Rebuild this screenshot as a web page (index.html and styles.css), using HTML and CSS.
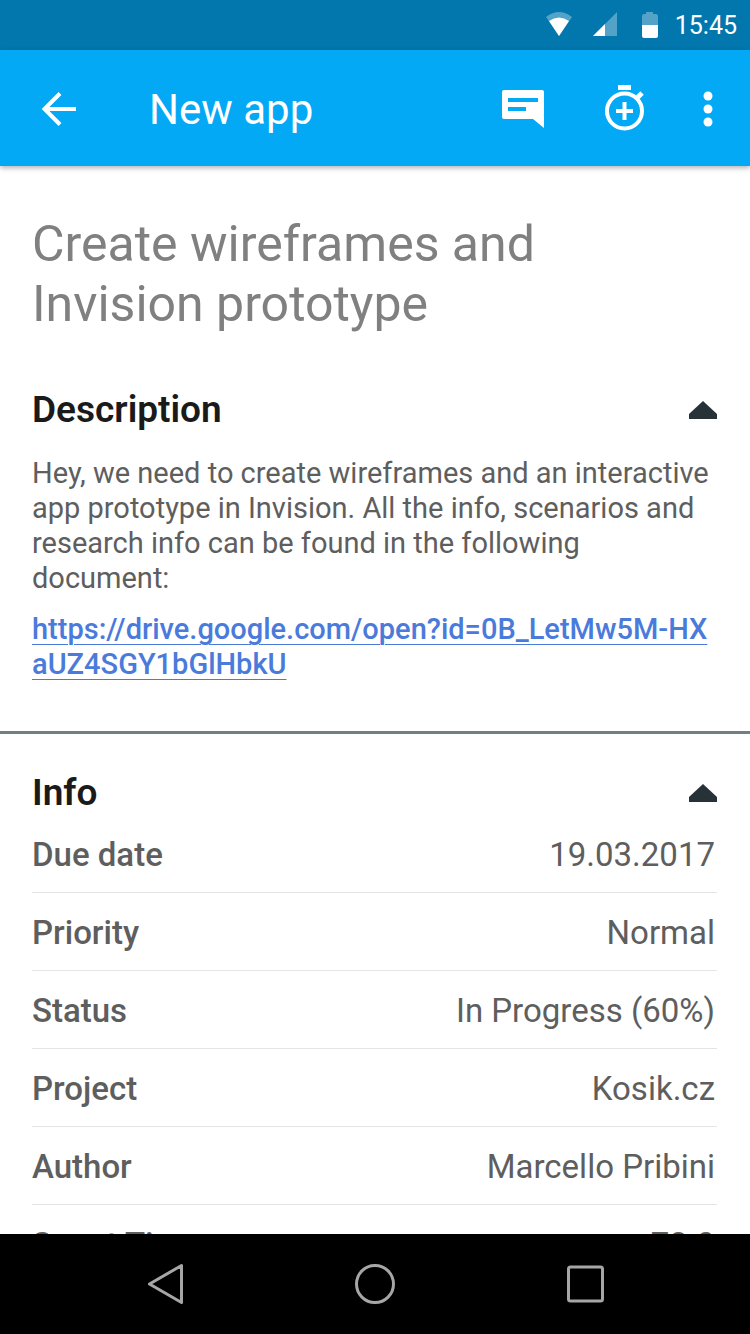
FILE: index.html
```html
<!DOCTYPE html>
<html lang="en">
<head>
  <meta charset="UTF-8">
  <title>New app</title>
  <meta name="viewport" content="width=device-width, initial-scale=1.0">
  <link rel="stylesheet" href="styles.css">
</head>
<body>
  <div class="status-bar">
    <svg class="status-icon" width="28" height="26" viewBox="0 0 28 26" aria-hidden="true">
      <path d="M1 5Q14-5 27 5L14 24Z" fill="#fff" opacity=".32"/>
      <path d="M4 9Q14 2 24 9L14 24Z" fill="#fff"/>
    </svg>
    <svg class="status-icon" width="24" height="26" viewBox="0 0 24 26" aria-hidden="true">
      <path d="M24 0V24H0Z" fill="#fff" opacity=".32"/>
      <path d="M12 12V24H0Z" fill="#fff"/>
    </svg>
    <svg class="status-icon battery" width="18" height="26" viewBox="0 0 18 26" aria-hidden="true">
      <path d="M5 0H12V2H15Q17 2 17 4V13H1V4Q1 2 3 2H5Z" fill="#fff" opacity=".32"/>
      <path d="M1 13H17V24Q17 26 15 26H3Q1 26 1 24Z" fill="#fff"/>
    </svg>
    <span class="clock">15:45</span>
  </div>

  <header class="app-bar">
    <button class="icon-btn" aria-label="Back">
      <svg width="36" height="36" viewBox="0 0 36 36" fill="none" stroke="#fff" stroke-width="4">
        <path d="M35 18H4M19 2.500L3.500 18L19 33.500"/>
      </svg>
    </button>
    <h1>New app</h1>
    <button class="icon-btn comment" aria-label="Comments">
      <svg width="42" height="38" viewBox="0 0 42 38">
        <path fill="#fff" fill-rule="evenodd" d="M2 0H40Q42 0 42 2V38L31 29H2Q0 29 0 27V2Q0 0 2 0ZM6 8V12H36V8ZM6 17V21H24V17Z"/>
      </svg>
    </button>
    <button class="icon-btn timer" aria-label="Add time">
      <svg width="40" height="48" viewBox="0 0 40 48" fill="none" stroke="#fff">
        <circle cx="19.500" cy="26" r="17.500" stroke-width="4"/>
        <path d="M13 2.500H26" stroke-width="5"/>
        <path d="M32 13L37 8" stroke-width="5"/>
        <path d="M11 26H28M19.500 17V35" stroke-width="4"/>
      </svg>
    </button>
    <button class="icon-btn" aria-label="More options">
      <svg width="10" height="36" viewBox="0 0 10 36" fill="#fff">
        <circle cx="5" cy="5" r="4.500"/>
        <circle cx="5" cy="18" r="4.500"/>
        <circle cx="5" cy="31" r="4.500"/>
      </svg>
    </button>
  </header>

  <main class="content">
    <h2 class="task-title">Create wireframes and Invision prototype</h2>

    <section class="description">
      <div class="section-head">
        <h3>Description</h3>
        <button class="icon-btn" aria-label="Collapse description">
          <svg width="28" height="18" viewBox="0 0 28 18"><path d="M14 0L28 13V18H0V13Z" fill="#263238"/></svg>
        </button>
      </div>
      <p>Hey, we need to create wireframes and an interactive app prototype in Invision. All the info, scenarios and research info can be found in the following document:</p>
      <a href="https://drive.google.com/open?id=0B_LetMw5M-HXaUZ4SGY1bGlHbkU">https://drive.google.com/open?id=0B_LetMw5M-HXaUZ4SGY1bGlHbkU</a>
    </section>

    <section class="info">
      <div class="section-head">
        <h3>Info</h3>
        <button class="icon-btn" aria-label="Collapse info">
          <svg width="28" height="18" viewBox="0 0 28 18"><path d="M14 0L28 13V18H0V13Z" fill="#263238"/></svg>
        </button>
      </div>
      <table>
        <tbody>
          <tr><th scope="row">Due date</th><td>19.03.2017</td></tr>
          <tr><th scope="row">Priority</th><td>Normal</td></tr>
          <tr><th scope="row">Status</th><td>In Progress (60%)</td></tr>
          <tr><th scope="row">Project</th><td>Kosik.cz</td></tr>
          <tr><th scope="row">Author</th><td>Marcello Pribini</td></tr>
          <tr><th scope="row">Spent Time</th><td>72.0</td></tr>
        </tbody>
      </table>
    </section>
  </main>

  <nav class="nav-bar">
    <button class="icon-btn" aria-label="Back">
      <svg width="40" height="42" viewBox="0 0 40 42" fill="none" stroke="#a6a6a6" stroke-width="3" stroke-linejoin="round">
        <path d="M36.500 2.500V39.500L4.500 21Z"/>
      </svg>
    </button>
    <button class="icon-btn" aria-label="Home">
      <svg width="40" height="42" viewBox="0 0 40 42" fill="none" stroke="#a6a6a6" stroke-width="3">
        <circle cx="20" cy="21" r="18.500"/>
      </svg>
    </button>
    <button class="icon-btn" aria-label="Recent apps">
      <svg width="40" height="42" viewBox="0 0 40 42" fill="none" stroke="#a6a6a6" stroke-width="3">
        <rect x="3.500" y="4" width="34" height="34" rx="2"/>
      </svg>
    </button>
  </nav>
</body>
</html>
```
FILE: styles.css
```css
:root {
  --bar: #03a9f4;
  --bar-dark: #0277ad;
  --title: #808080;
  --heading: #1a1a1a;
  --text: #5e5e5e;
  --link: #4a7bdb;
  --line: #e4e4e4;
}

* {
  box-sizing: border-box;
}

body {
  display: flex;
  flex-direction: column;
  height: 100vh;
  margin: 0;
  background-color: #fff;
  color: var(--text);
  font-family: Roboto, "Liberation Sans", sans-serif;
}

h1, h2, h3, p {
  margin: 0;
}

svg {
  display: block;
}

.icon-btn {
  padding: 0;
  border: none;
  background: none;
  cursor: pointer;
}

.status-bar {
  display: flex;
  flex: none;
  align-items: center;
  justify-content: flex-end;
  height: 50px;
  padding-right: 13px;
  background-color: var(--bar-dark);
  color: #fff;
}

.status-icon {
  margin-right: 24px;
}

.status-icon:first-child {
  margin-right: 20px;
}

.status-icon.battery {
  margin-right: 16px;
}

.clock {
  font-size: 25px;
}

.app-bar {
  display: flex;
  flex: none;
  align-items: center;
  height: 116px;
  padding: 2px 37px 0 41px;
  background-color: var(--bar);
  box-shadow: 0 2px 5px rgba(0, 0, 0, 0.3);
  color: #fff;
  z-index: 1;
}

.app-bar h1 {
  flex: 1;
  margin-left: 72px;
  font-size: 42px;
  font-weight: 400;
}

.comment {
  margin-right: 61px;
}

.timer {
  margin-right: 58px;
}

.content {
  flex: 1;
  min-height: 0;
  overflow: hidden;
}

.task-title {
  padding: 48px 32px 0;
  color: var(--title);
  font-size: 50px;
  font-weight: 400;
  line-height: 60px;
}

.section-head {
  display: flex;
  align-items: center;
  justify-content: space-between;
}

.section-head h3 {
  color: var(--heading);
  font-size: 37px;
  font-weight: 600;
  line-height: 44px;
}

.description {
  padding: 54px 33px 49px 32px;
  border-bottom: 3px solid #708080;
  font-size: 29px;
  line-height: 35px;
}

.description p {
  margin: 24px 0 16px;
}

.description a {
  display: block;
  color: var(--link);
  font-weight: 500;
  text-decoration-thickness: 1px;
  text-underline-offset: 5px;
  word-break: break-all;
}

.info {
  padding: 37px 33px 0 32px;
}

table {
  width: 100%;
  border-spacing: 0;
}

th, td {
  height: 78px;
  padding: 2px 0 0;
  border-bottom: 1px solid var(--line);
  font-size: 33px;
}

th {
  font-weight: 500;
  text-align: left;
}

td {
  padding-right: 2px;
  text-align: right;
}

.nav-bar {
  display: flex;
  flex: none;
  align-items: center;
  justify-content: center;
  gap: 170px;
  height: 100px;
  background-color: #000;
}
```
